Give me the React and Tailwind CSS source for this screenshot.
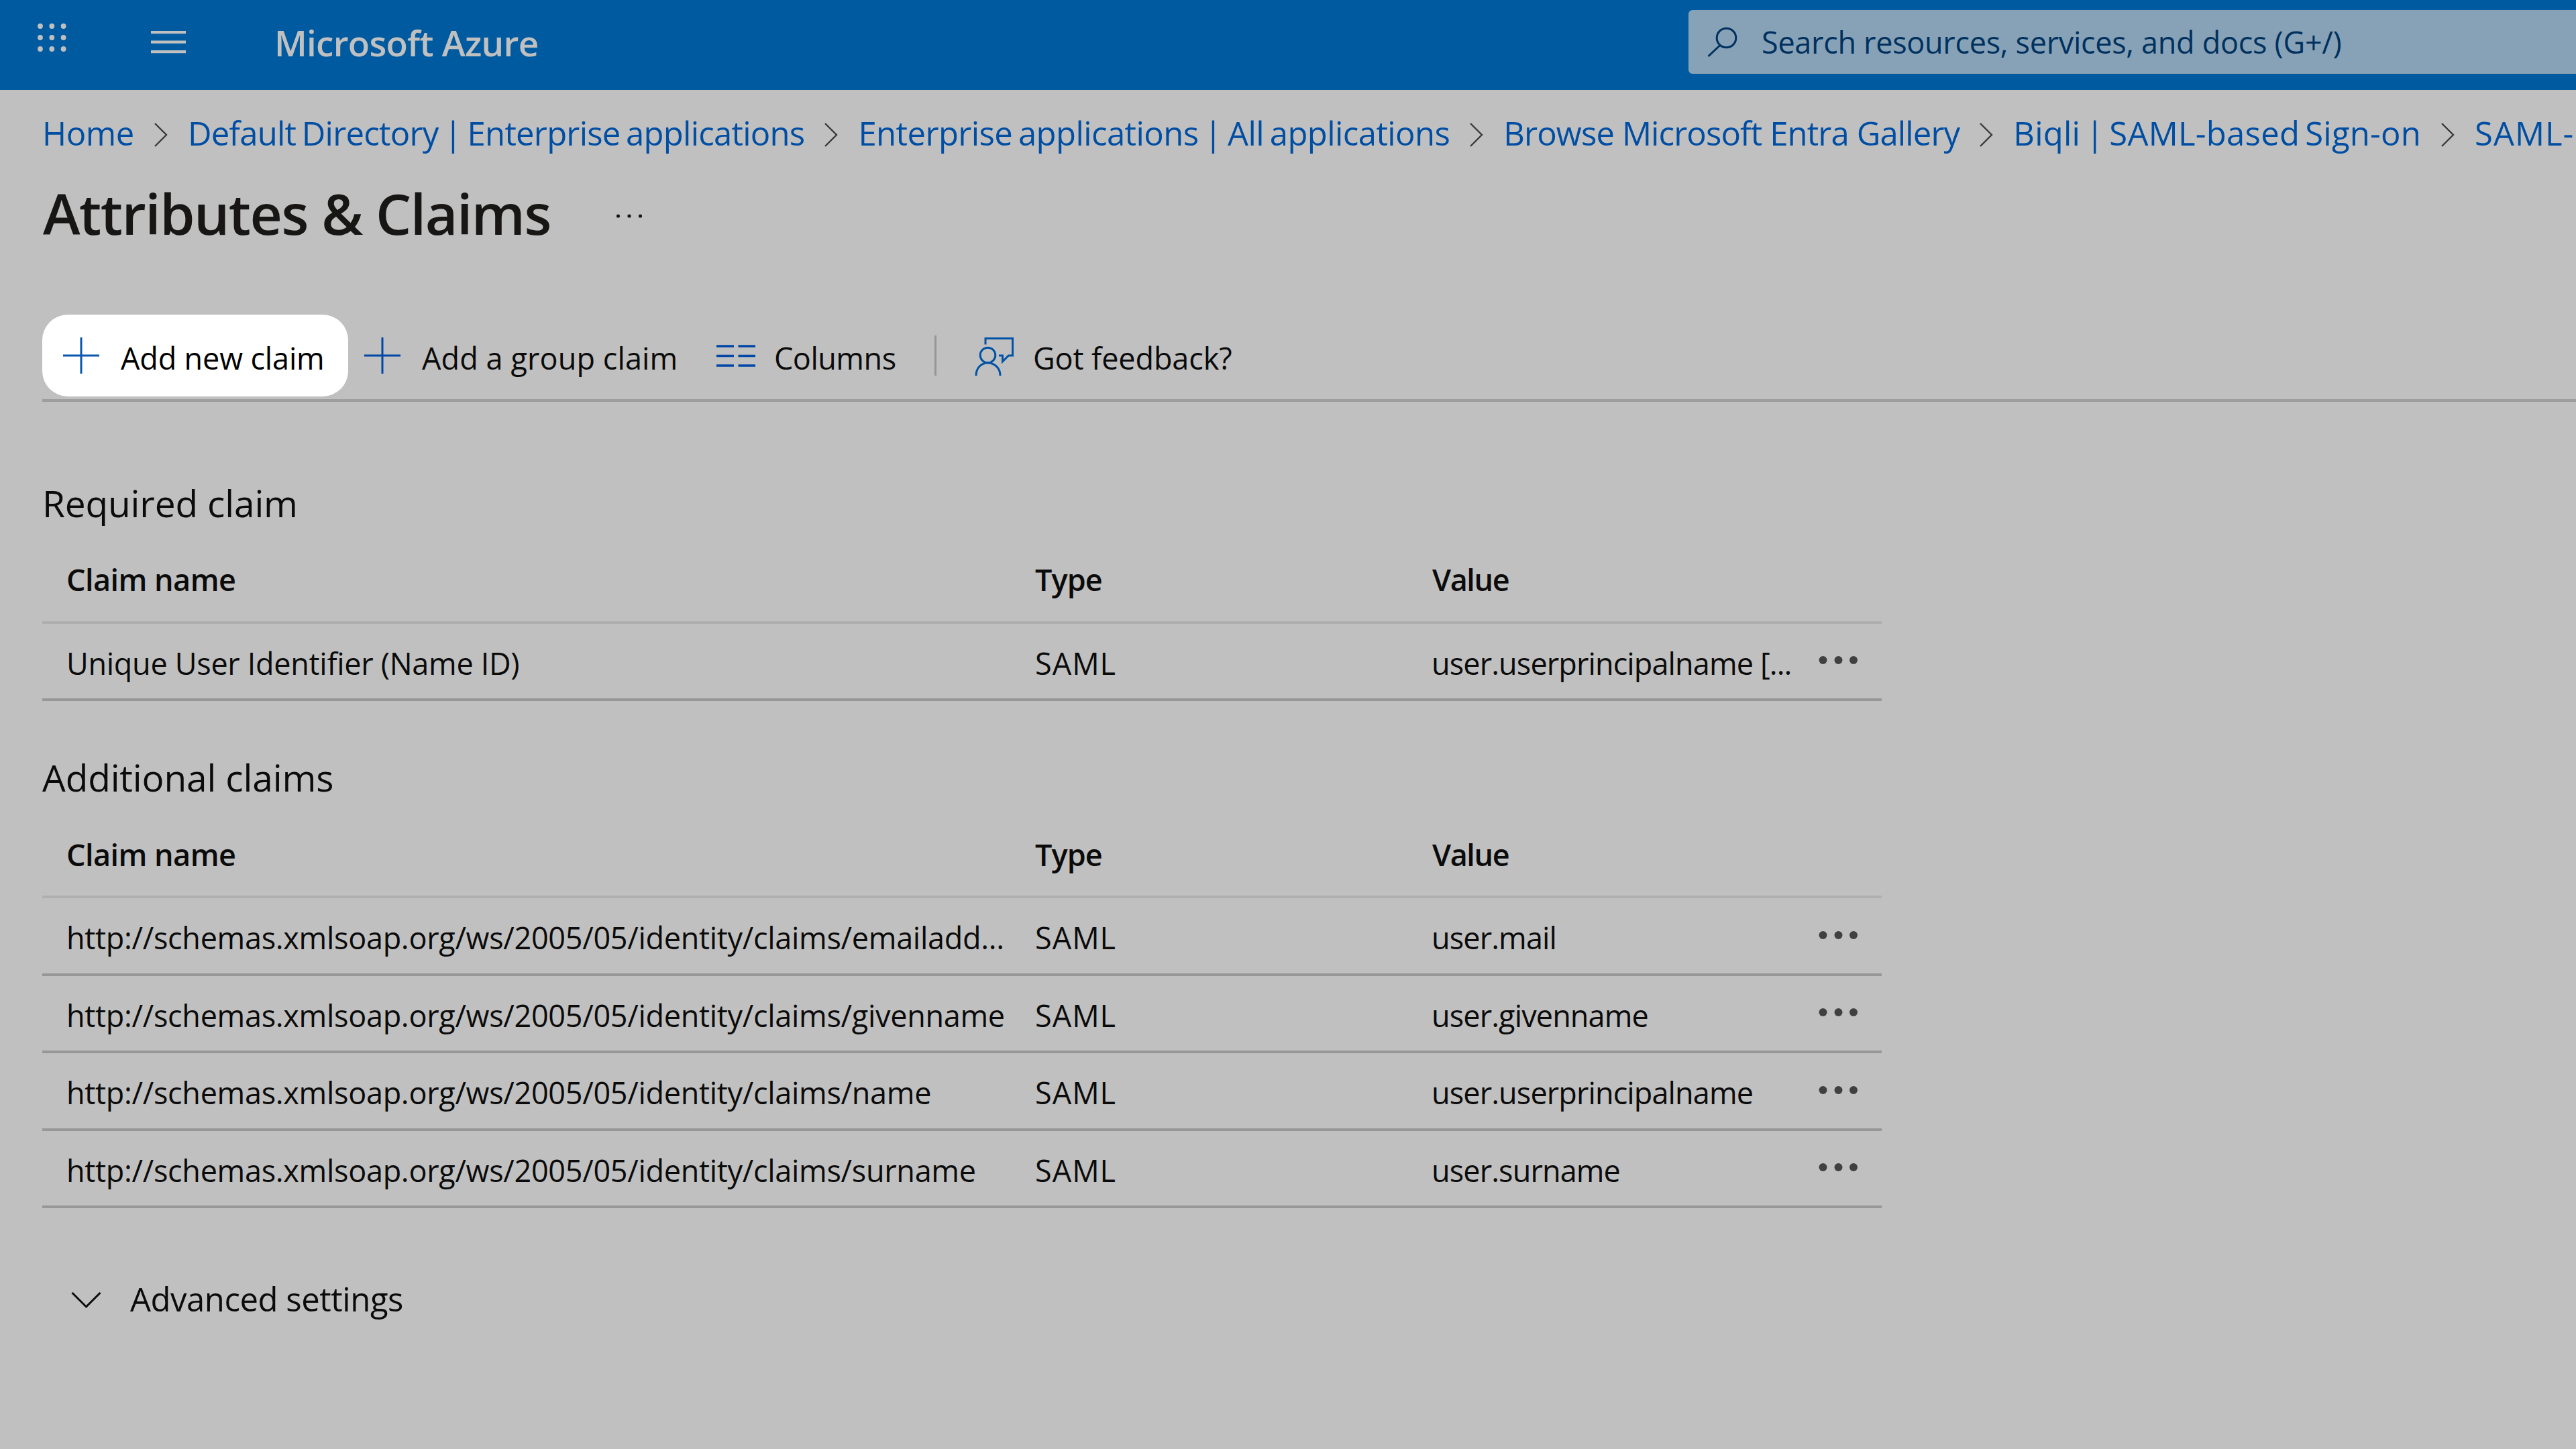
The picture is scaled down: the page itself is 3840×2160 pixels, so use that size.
// src/pages/AttributesClaims.jsx
import { Fragment } from "react";

const breadcrumbs = [
  { label: "Home", className: "tracking-[-0.4px]" },
  { label: "Default Directory | Enterprise applications", className: "tracking-[-0.75px] [word-spacing:-3.5px]" },
  { label: "Enterprise applications | All applications", className: "tracking-[-0.57px] [word-spacing:-3.5px]" },
  { label: "Browse Microsoft Entra Gallery", className: "tracking-[-0.87px]" },
  { label: "Biqli | SAML-based Sign-on", className: "tracking-[0.25px] [word-spacing:-5px]" },
  { label: "SAML-", className: "tracking-[1px]" },
];

const requiredClaims = [
  { name: "Unique User Identifier (Name ID)", type: "SAML", value: "user.userprincipalname [..." },
];

const additionalClaims = [
  { name: "http://schemas.xmlsoap.org/ws/2005/05/identity/claims/emailadd...", type: "SAML", value: "user.mail" },
  { name: "http://schemas.xmlsoap.org/ws/2005/05/identity/claims/givenname", type: "SAML", value: "user.givenname" },
  { name: "http://schemas.xmlsoap.org/ws/2005/05/identity/claims/name", type: "SAML", value: "user.userprincipalname" },
  { name: "http://schemas.xmlsoap.org/ws/2005/05/identity/claims/surname", type: "SAML", value: "user.surname" },
];

function PlusIcon() {
  return (
    <svg className="w-[54px] h-[54px] shrink-0" viewBox="0 0 54 54" fill="none" stroke="currentColor" strokeWidth="3">
      <path d="M27 0V54M0 27H54" />
    </svg>
  );
}

function ColumnsIcon() {
  return (
    <svg className="w-[58px] h-[34px] shrink-0" viewBox="0 0 58 34" fill="none" stroke="currentColor" strokeWidth="3.4">
      <path d="M0 3H26M32.5 3H58M0 17.5H26M32.5 17.5H58M0 32H26M32.5 32H58" />
    </svg>
  );
}

function FeedbackIcon() {
  return (
    <svg className="w-[62px] h-[60px] shrink-0" viewBox="0 0 62 60" fill="none" stroke="currentColor" strokeWidth="3">
      <path d="M18 13.5V4.5H58.5V30H52.5L43.5 39V30H38" />
      <circle cx="21.5" cy="29.5" r="11.3" />
      <path d="M4 60C4 48.5 11.5 41 21.5 41S40 48.5 40 60" />
    </svg>
  );
}

function MoreDots() {
  return (
    <svg className="w-[62px] h-[14px]" viewBox="0 0 62 14" fill="#404040">
      <circle cx="10.5" cy="6" r="6" />
      <circle cx="33.5" cy="6" r="6" />
      <circle cx="56" cy="6" r="6" />
    </svg>
  );
}

function TopBar() {
  return (
    <header className="flex items-center h-[134px] pb-[9px] bg-[#005a9f] text-[#c0c0c0]">
      <svg className="ml-[52px] mb-[13px] w-[50px] h-[50px]" viewBox="0 0 50 50" fill="currentColor">
        {[8, 25, 42].map((y) => (
          <Fragment key={y}>
            <circle cx="8" cy={y} r="3.9" />
            <circle cx="25.3" cy={y} r="3.9" />
            <circle cx="42.6" cy={y} r="3.9" />
          </Fragment>
        ))}
      </svg>
      <svg className="ml-[123px] w-[52px] h-[34px]" viewBox="0 0 52 34" stroke="currentColor" strokeWidth="4.2">
        <path d="M0 2.2H52M0 16.6H52M0 31.1H52" />
      </svg>
      <span className="ml-[132px] pt-px text-[53px] font-semibold tracking-[-0.75px]">Microsoft Azure</span>
      <div className="ml-auto flex items-center w-[1323px] h-[95px] pl-[28px] rounded-l-[6px] bg-[#87a2b7] text-[#00315e]">
        <svg className="w-[46px] h-[46px]" viewBox="0 0 46 46" fill="none" stroke="currentColor" strokeWidth="3">
          <circle cx="28.5" cy="16.5" r="14.3" />
          <path d="M19 27.5L1.5 44" />
        </svg>
        <span className="ml-[35px] text-[45px] tracking-[-0.3px]">Search resources, services, and docs (G+/)</span>
      </div>
    </header>
  );
}

function ClaimsTable({ title, claims }) {
  return (
    <section className="w-[2742px]">
      <h2 className="flex items-center h-[102px] text-[55px] tracking-[-0.15px]">{title}</h2>
      <div className="grid grid-cols-[1444px_592px_572px_1fr] items-center h-[129.5px] pl-[36px] border-b-4 border-[#afafaf] text-[45px] font-semibold">
        <span className="pt-[2px] tracking-[-0.55px]">Claim name</span>
        <span className="pt-[2px] tracking-[-0.9px]">Type</span>
        <span className="pt-[2px] tracking-[-1.4px]">Value</span>
      </div>
      {claims.map((claim) => (
        <div
          key={claim.name}
          className="grid grid-cols-[1444px_591px_573px_1fr] items-center h-[115.5px] pl-[36px] border-b-4 border-[#979797] text-[45px]"
        >
          <span className="pt-[6px] tracking-[-0.3px]">{claim.name}</span>
          <span className="pt-[6px] tracking-[1px]">{claim.type}</span>
          <span className="pt-[6px] tracking-[-0.88px]">{claim.value}</span>
          <MoreDots />
        </div>
      ))}
    </section>
  );
}

export default function App() {
  return (
    <div className="w-[3840px] h-[2160px] overflow-hidden bg-[#c0c0c0] text-[#0b0b0b] font-['Open_Sans',sans-serif] leading-none whitespace-nowrap">
      <TopBar />

      <nav className="flex items-center gap-[30px] h-[128px] pl-[63px] text-[49px] text-[#004ea3]">
        {breadcrumbs.map((crumb, i) => (
          <Fragment key={crumb.label}>
            {i > 0 && (
              <svg className="w-[20px] h-[36px] mt-[5px] shrink-0" viewBox="0 0 20 36" fill="none" stroke="#3a3a3a" strokeWidth="2.4">
                <path d="M1 1L18 18L1 35" />
              </svg>
            )}
            <a className={crumb.className}>{crumb.label}</a>
          </Fragment>
        ))}
      </nav>

      <main className="pl-[63px]">
        <div className="flex items-center h-[111px]">
          <h1 className="w-[854px] pl-px text-[84px] font-semibold tracking-[-1.5px] text-[#171615]">Attributes &amp; Claims</h1>
          <svg className="mt-[9px] w-[42px] h-[8px]" viewBox="0 0 42 8" fill="#171615">
            <circle cx="4.5" cy="4" r="2.6" />
            <circle cx="21" cy="4" r="2.6" />
            <circle cx="37.5" cy="4" r="2.6" />
          </svg>
        </div>

        {/* command bar */}
        <div className="flex items-center mt-[96px] h-[130px] pb-[4px] border-b-4 border-[#9e9e9e] text-[45px]">
          <button className="flex items-center gap-[32px] w-[456px] h-[122px] pl-[31px] rounded-[38px] bg-white">
            <span className="text-[#0a58ad]"><PlusIcon /></span>
            <span className="pt-[7px] tracking-[-0.15px] text-black">Add new claim</span>
          </button>
          <button className="flex items-center gap-[32px] w-[525px] ml-[24px]">
            <span className="text-[#0047a6]"><PlusIcon /></span>
            <span className="pt-[7px] tracking-[0.1px]">Add a group claim</span>
          </button>
          <button className="flex items-center gap-[28px] w-[325px] text-[#0047a6]">
            <ColumnsIcon />
            <span className="pt-[7px] tracking-[-0.5px] text-[#0b0b0b]">Columns</span>
          </button>
          <div className="w-[3px] h-[60px] bg-[#969696]" />
          <button className="flex items-center gap-[27px] ml-[55px] text-[#0053a6]">
            <FeedbackIcon />
            <span className="pt-[7px] tracking-[-0.1px] text-[#0b0b0b]">Got feedback?</span>
          </button>
        </div>

        <div className="flex flex-col gap-[62.5px] mt-[99px]">
          <ClaimsTable title="Required claim" claims={requiredClaims} />
          <ClaimsTable title="Additional claims" claims={additionalClaims} />
        </div>

        <button className="flex items-center h-[80px] mt-[94px] pl-[43px] text-[49px]">
          <svg className="w-[45px] h-[26px] mt-[5px]" viewBox="0 0 45 26" fill="none" stroke="currentColor" strokeWidth="3">
            <path d="M1.5 2L22.5 23L43.5 2" />
          </svg>
          <span className="ml-[43px] pt-[2px] tracking-[-0.45px]">Advanced settings</span>
        </button>
      </main>
    </div>
  );
}
